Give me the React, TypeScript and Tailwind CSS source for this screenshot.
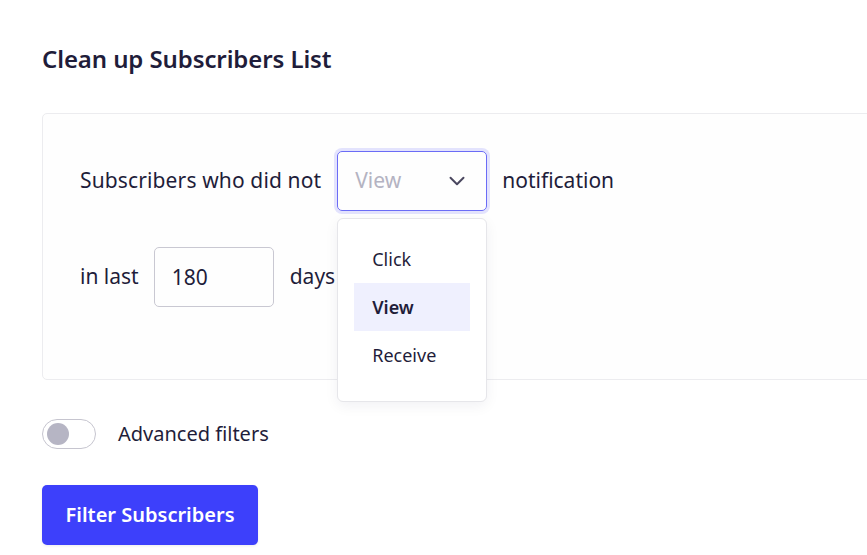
import { ChevronDown } from "lucide-react";

const OPTIONS = ["Click", "View", "Receive"];

const App = () => {
  return (
    <div className="min-h-[555px] w-full overflow-hidden bg-white font-['Noto_Sans',sans-serif] text-[#1f1d3a]">
      <div className="pl-[42px] pt-[43px]">
        <h1 className="text-[24px] font-semibold leading-[32px] tracking-[-0.1px]">Clean up Subscribers List</h1>

        <div className="mt-[38px] -mr-4 rounded-l-[5px] border border-[#ececef] bg-[#fefefe] pb-[72px] pl-[37px] pt-[37px]">
          <div className="flex items-center text-[21px]">
            <span className="tracking-[0.13px]">Subscribers who did not</span>
            <div className="relative ml-[16px]">
              <button className="flex h-[60px] w-[150px] items-center justify-between rounded-[5px] border border-[#6b6cf6] pl-[17px] pr-[16px] shadow-[0_0_0_3px_#e3e3fd]">
                <span className="text-[21px] text-[#b4b3c2]">View</span>
                <ChevronDown className="h-[26px] w-[26px] text-[#4a475f]" strokeWidth={1.8} />
              </button>
              <div className="absolute left-0 top-[67px] z-10 w-[150px] rounded-[6px] border border-[#e6e6ea] bg-white px-[16px] pb-[22px] pt-[16px] shadow-[0_4px_14px_rgba(20,20,60,0.06)]">
                {OPTIONS.map((opt) => (
                  <div
                    key={opt}
                    className={`flex h-[48px] items-center px-[18px] text-[18px] ${
                      opt === "View" ? "bg-[#eff0fe] font-semibold" : ""
                    }`}
                  >
                    {opt}
                  </div>
                ))}
              </div>
            </div>
            <span className="ml-[15px]">notification</span>
          </div>

          <div className="mt-[36px] flex items-center text-[21px]">
            <span>in last</span>
            <input
              defaultValue="180"
              className="ml-[15px] h-[60px] w-[120px] rounded-[5px] border border-[#c9c8d2] px-[17px] text-[21px] text-[#1f1d3a] outline-none"
            />
            <span className="ml-[16px]">days</span>
          </div>
        </div>

        <div className="mt-[39px] flex items-center">
          <div className="flex h-[30px] w-[54px] items-center rounded-full border border-[#c6c5cf] bg-white pl-[4px]">
            <div className="h-[22px] w-[22px] rounded-full bg-[#b6b5c4]" />
          </div>
          <span className="ml-[22px] text-[20px]">Advanced filters</span>
        </div>

        <button className="mt-[36px] h-[60px] w-[216px] rounded-[5px] bg-[#3d40fb] text-[20px] font-semibold text-white shadow-[0_1px_3px_rgba(0,0,0,0.08)]">
          Filter Subscribers
        </button>
      </div>
    </div>
  );
};

export default App;
